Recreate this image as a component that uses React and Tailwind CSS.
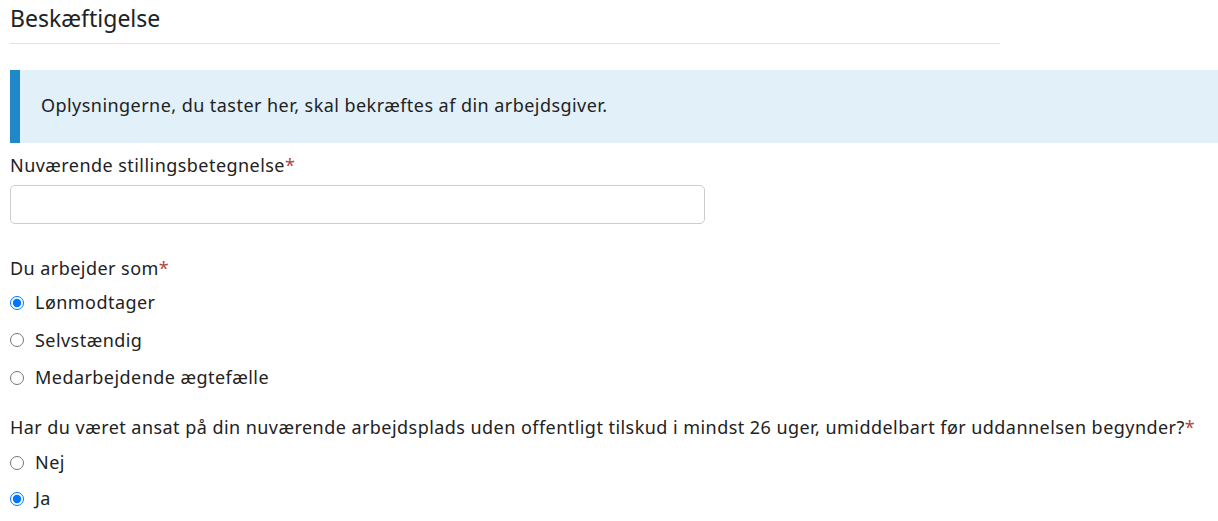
import React from 'react';

const Req = () => <span className="text-[#b0463a]">*</span>;

const Radio = ({ name, label, checked, h = 'h-[37.5px]' }) => (
  <label className={`flex items-center ${h}`}>
    <input
      type="radio"
      name={name}
      defaultChecked={checked}
      className="m-0 w-[14px] h-[14px] shrink-0"
    />
    <span className="ml-[11px]">{label}</span>
  </label>
);

const App = () => {
  return (
    <div
      className="bg-white w-[1218px] h-[521px] overflow-hidden pl-[10px] text-[#222] text-[18px] tracking-[0.45px]"
      style={{ fontFamily: '"Noto Sans", "Open Sans", sans-serif' }}
    >
      {/* Section heading */}
      <h2 className="w-[990px] pt-[3px] pb-[10px] text-[23px] leading-[30px] tracking-normal border-b border-[#e2e2e2]">
        Beskæftigelse
      </h2>

      {/* Info box */}
      <div className="mt-[26px] h-[73px] flex items-center bg-[#e1f0f9] border-l-[10px] border-[#1e88c9] pl-[21px]">
        <p className="leading-6 -mt-[3px]">Oplysningerne, du taster her, skal bekræftes af din arbejdsgiver.</p>
      </div>

      {/* Job title */}
      <div className="mt-[10px] leading-6">
        Nuværende stillingsbetegnelse<Req />
      </div>
      <input
        type="text"
        className="block mt-[8px] w-[695px] h-[39px] border border-[#ccc] rounded-[5px] px-3 outline-none"
      />

      {/* Work type */}
      <div className="mt-[32px] leading-6">
        Du arbejder som<Req />
      </div>
      <div className="mt-[4px]">
        <Radio name="type" label="Lønmodtager" checked />
        <Radio name="type" label="Selvstændig" />
        <Radio name="type" label="Medarbejdende ægtefælle" />
      </div>

      {/* Employment duration */}
      <div className="mt-[18px] leading-6">
        Har du været ansat på din nuværende arbejdsplads uden offentligt tilskud i mindst 26 uger, umiddelbart før uddannelsen begynder?<Req />
      </div>
      <div className="mt-[6px]">
        <Radio name="emp" label="Nej" h="h-[36px]" />
        <Radio name="emp" label="Ja" h="h-[36px]" checked />
      </div>
    </div>
  );
};

export default App;
